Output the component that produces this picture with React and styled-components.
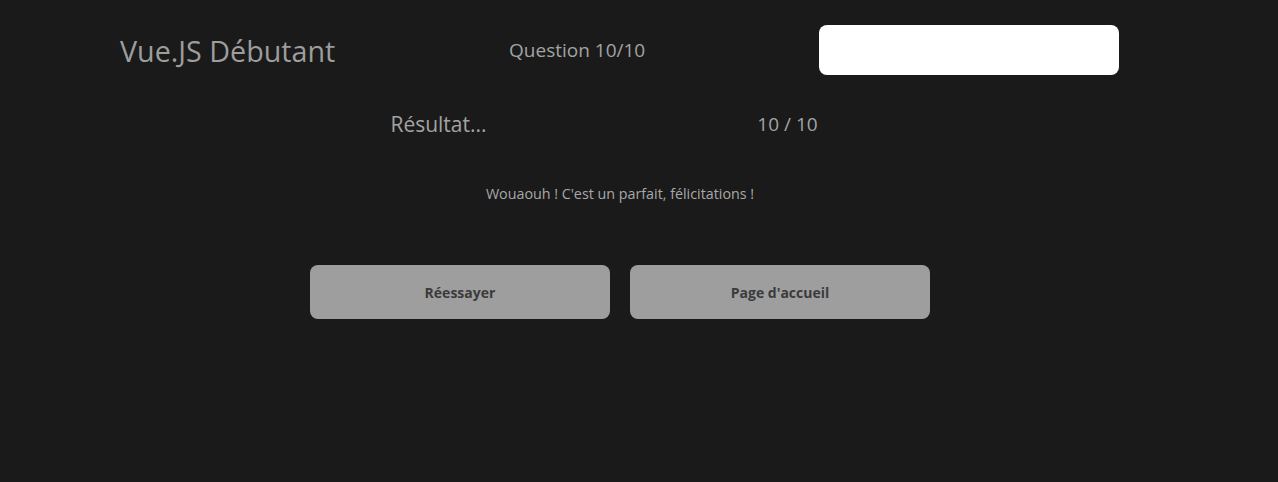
import styled, { createGlobalStyle } from "styled-components";

const GlobalStyle = createGlobalStyle`
  html, body {
    margin: 0;
    padding: 0;
    background-color: #1a1a1a;
    font-family: "Open Sans", "Noto Sans", sans-serif;
    color: #a0a0a0;
  }
`;

const Page = styled.div`
  width: 1240px;
  min-height: 482px;
  display: flex;
  flex-direction: column;
  align-items: center;
`;
const Header = styled.header`
  width: 999px;
  height: 50px;
  margin-top: 25px;
  align-self: flex-start;
  margin-left: 120px;
  display: flex;
  justify-content: space-between;
  align-items: center;
`;
const Title = styled.h1`
  margin: 0;
  font-size: 28.7px;
  font-weight: 400;
  color: #9d9d9d;
`;
const Counter = styled.p`
  margin: 0;
  font-size: 19px;
  color: #a3a3a3;
`;
const BlankBox = styled.div`
  width: 300px;
  height: 50px;
  border-radius: 8px;
  background-color: #ffffff;
`;
const ResultRow = styled.div`
  margin-top: 35px;
  display: grid;
  grid-template-columns: 349px 349px;
  justify-items: center;
  align-items: center;
  height: 26px;
  transform: translateX(-7px);
`;
const ResultLabel = styled.h2`
  margin: 0;
  font-size: 21px;
  font-weight: 400;
  color: #a3a3a3;
`;
const Score = styled.span`
  font-size: 19px;
  color: #a3a3a3;
`;
const Message = styled.p`
  margin: 48px 0 0;
  font-size: 14.3px;
  line-height: 20px;
  color: #a8a8a8;
`;
const Buttons = styled.div`
  margin-top: 61px;
  display: flex;
  gap: 20px;
`;
const Button = styled.button`
  width: 300px;
  height: 54px;
  border: none;
  border-radius: 8px;
  background-color: #9e9e9e;
  color: #3b3b3b;
  font-family: inherit;
  font-size: 14px;
  font-weight: 700;
  cursor: pointer;
`;

export default function App() {
  return (
    <>
      <GlobalStyle />
      <Page>
        <Header>
          <Title>Vue.JS Débutant</Title>
          <Counter>Question 10/10</Counter>
          <BlankBox />
        </Header>
        <ResultRow>
          <ResultLabel>Résultat...</ResultLabel>
          <Score>10 / 10</Score>
        </ResultRow>
        <Message>Wouaouh ! C'est un parfait, félicitations !</Message>
        <Buttons>
          <Button>Réessayer</Button>
          <Button>Page d'accueil</Button>
        </Buttons>
      </Page>
    </>
  );
}
